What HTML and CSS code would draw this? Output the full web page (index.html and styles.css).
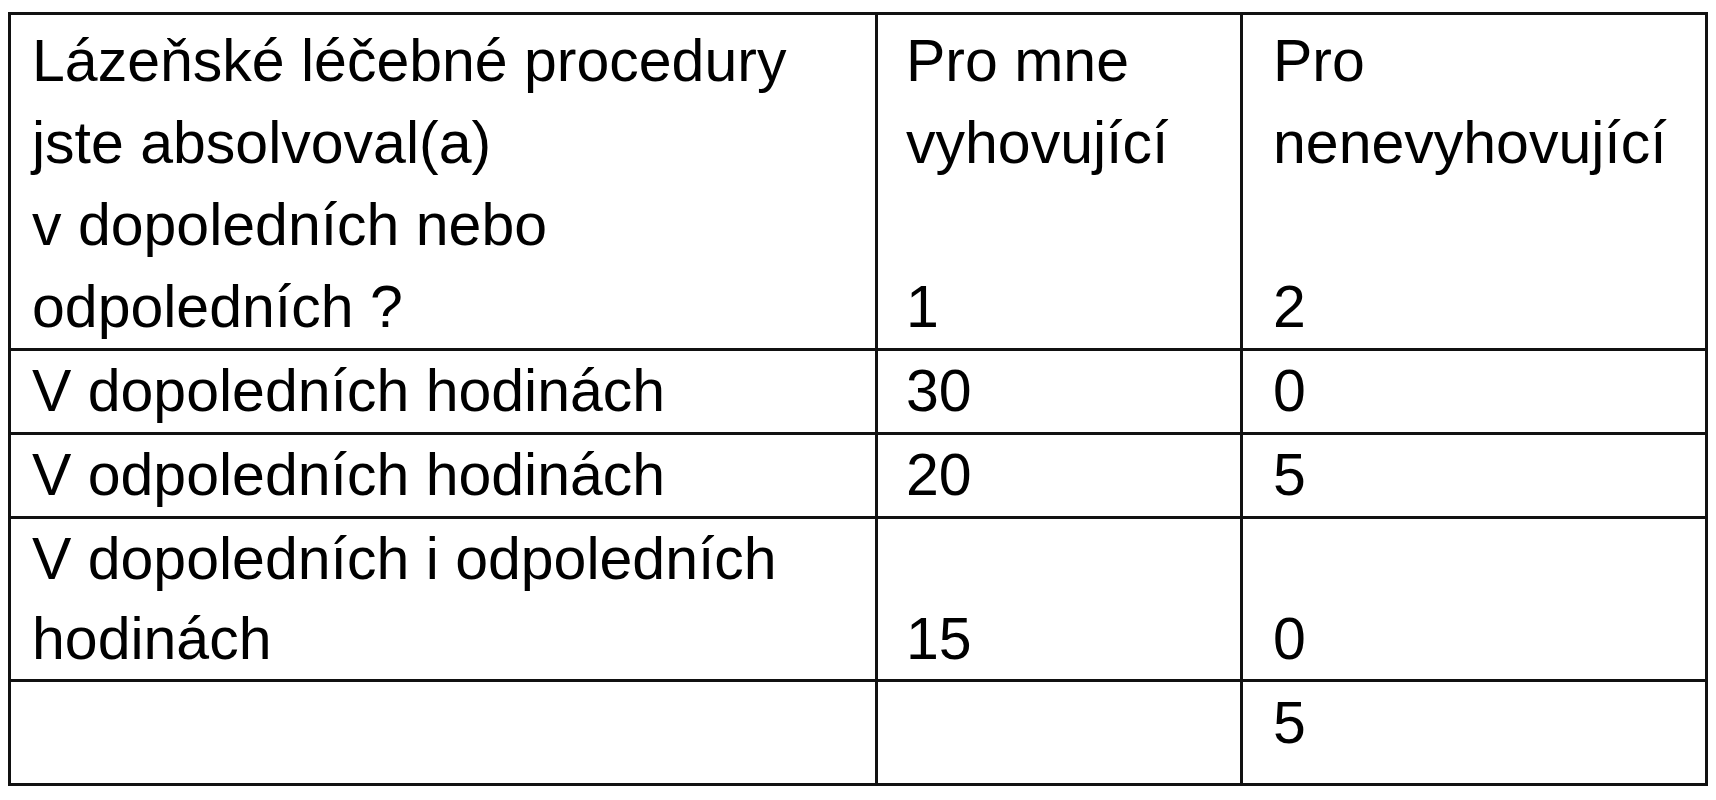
FILE: index.html
```html
<!DOCTYPE html>
<html lang="cs">
<head>
<meta charset="utf-8">
<title>Lázeňské léčebné procedury</title>
<link rel="stylesheet" href="styles.css">
</head>
<body>
<table class="survey">
  <colgroup>
    <col class="c1">
    <col class="c2">
    <col class="c3">
  </colgroup>
  <tr class="head">
    <td class="q">Lázeňské léčebné procedury<br>jste absolvoval(a)<br>v dopoledních nebo<br>odpoledních ?</td>
    <td class="n1">Pro mne<br>vyhovující<br><br>1</td>
    <td class="n2">Pro<br>nenevyhovující<br><br>2</td>
  </tr>
  <tr>
    <td class="q">V dopoledních hodinách</td>
    <td class="n1">30</td>
    <td class="n2">0</td>
  </tr>
  <tr>
    <td class="q">V odpoledních hodinách</td>
    <td class="n1">20</td>
    <td class="n2">5</td>
  </tr>
  <tr class="two">
    <td class="q">V dopoledních i odpoledních<br>hodinách</td>
    <td class="n1">15</td>
    <td class="n2">0</td>
  </tr>
  <tr class="last">
    <td class="q"></td>
    <td class="n1"></td>
    <td class="n2">5</td>
  </tr>
</table>
</body>
</html>
```

FILE: styles.css
```css
html, body {
  margin: 0;
  background: #ffffff;
}

body {
  padding: 12px 8px 0 8px;
  font-family: "Liberation Sans", Arial, sans-serif;
  color: #000000;
}

.survey {
  width: 1700px;
  table-layout: fixed;
  border-collapse: separate;
  border-spacing: 0;
  border: 3px solid #111111;
  font-size: 59px;
  line-height: 81px;
}

.c1 { width: 867px; }
.c2 { width: 365px; }
.c3 { width: 462px; }

.survey td {
  box-sizing: border-box;
  padding: 0;
  vertical-align: bottom;
  white-space: nowrap;
  border-bottom: 3px solid #111111;
  border-right: 3px solid #111111;
}

.survey td.n2 {
  border-right: none;
}

.survey tr.head td {
  line-height: 82px;
  padding-top: 5px;
}

.survey tr.two td {
  line-height: 80px;
}

.survey tr.last td {
  border-bottom: none;
  vertical-align: top;
  line-height: 82px;
  padding-bottom: 19px;
}

.survey td.q {
  padding-left: 21px;
}

.survey td.n1 {
  padding-left: 28px;
}

.survey td.n2 {
  padding-left: 30px;
}
```
